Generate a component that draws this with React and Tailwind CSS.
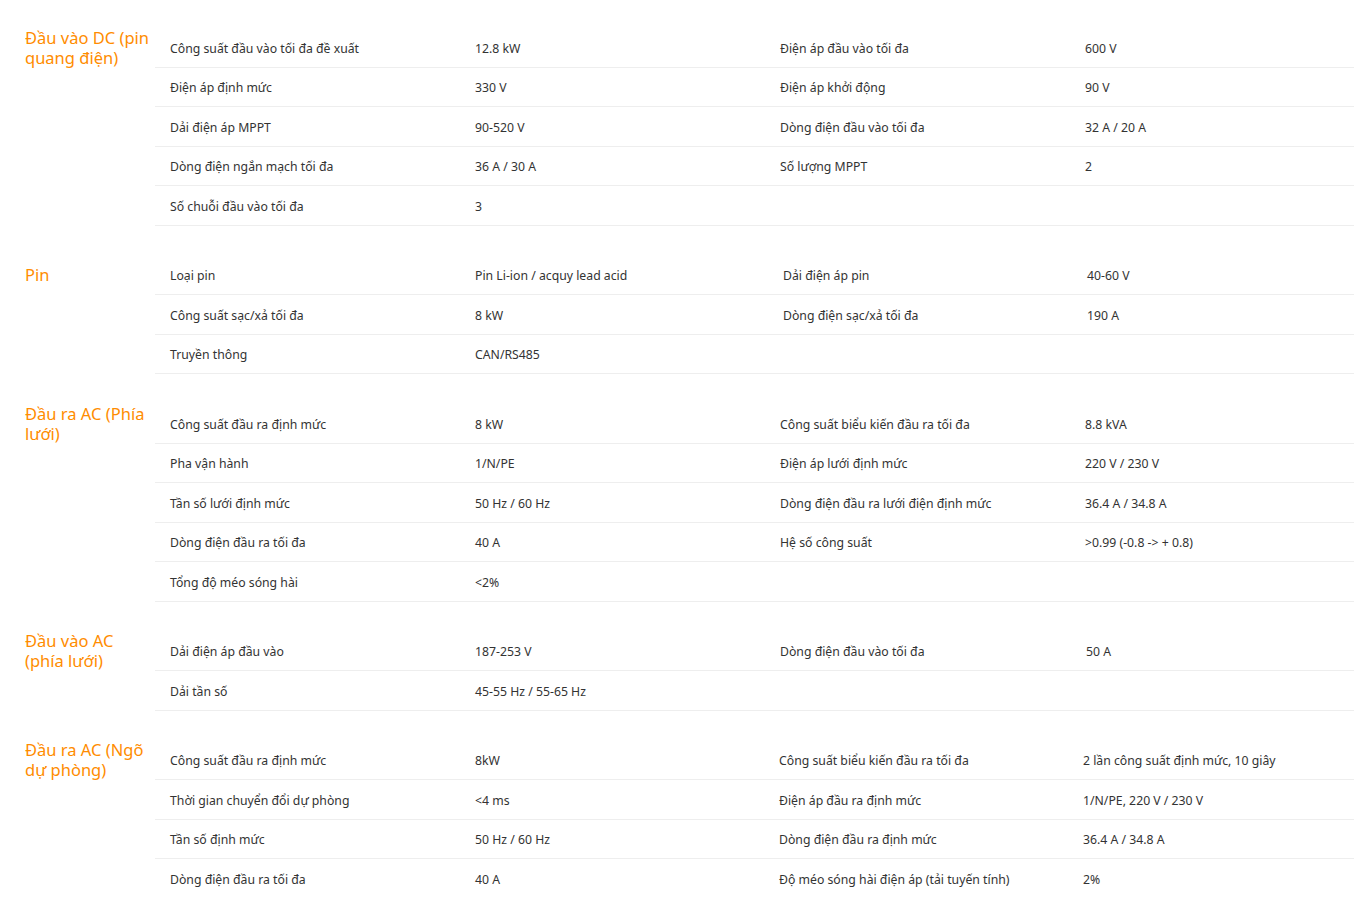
const sections = [
  {
    title: ['Đầu vào DC (pin', 'quang điện)'],
    cols: 'grid-cols-[305px_305px_305px_1fr]',
    rows: [
      ['Công suất đầu vào tối đa đề xuất', '12.8 kW', 'Điện áp đầu vào tối đa', '600 V'],
      ['Điện áp định mức', '330 V', 'Điện áp khởi động', '90 V'],
      ['Dải điện áp MPPT', '90-520 V', 'Dòng điện đầu vào tối đa', '32 A / 20 A'],
      ['Dòng điện ngắn mạch tối đa', '36 A / 30 A', 'Số lượng MPPT', '2'],
      ['Số chuỗi đầu vào tối đa', '3', '', ''],
    ],
  },
  {
    title: ['Pin'],
    cols: 'grid-cols-[305px_308px_304px_1fr]',
    rows: [
      ['Loại pin', 'Pin Li-ion / acquy lead acid', 'Dải điện áp pin', '40-60 V'],
      ['Công suất sạc/xả tối đa', '8 kW', 'Dòng điện sạc/xả tối đa', '190 A'],
      ['Truyền thông', 'CAN/RS485', '', ''],
    ],
  },
  {
    title: ['Đầu ra AC (Phía', 'lưới)'],
    cols: 'grid-cols-[305px_305px_305px_1fr]',
    rows: [
      ['Công suất đầu ra định mức', '8 kW', 'Công suất biểu kiến đầu ra tối đa', '8.8 kVA'],
      ['Pha vận hành', '1/N/PE', 'Điện áp lưới định mức', '220 V / 230 V'],
      ['Tần số lưới định mức', '50 Hz / 60 Hz', 'Dòng điện đầu ra lưới điện định mức', '36.4 A / 34.8 A'],
      ['Dòng điện đầu ra tối đa', '40 A', 'Hệ số công suất', '>0.99 (-0.8 -> + 0.8)'],
      ['Tổng độ méo sóng hài', '<2%', '', ''],
    ],
  },
  {
    title: ['Đầu vào AC', '(phía lưới)'],
    cols: 'grid-cols-[305px_305px_306px_1fr]',
    rows: [
      ['Dải điện áp đầu vào', '187-253 V', 'Dòng điện đầu vào tối đa', '50 A'],
      ['Dải tần số', '45-55 Hz / 55-65 Hz', '', ''],
    ],
  },
  {
    title: ['Đầu ra AC (Ngõ', 'dự phòng)'],
    cols: 'grid-cols-[305px_304px_304px_1fr]',
    rows: [
      ['Công suất đầu ra định mức', '8kW', 'Công suất biểu kiến đầu ra tối đa', '2 lần công suất định mức, 10 giây'],
      ['Thời gian chuyển đổi dự phòng', '<4 ms', 'Điện áp đầu ra định mức', '1/N/PE, 220 V / 230 V'],
      ['Tần số định mức', '50 Hz / 60 Hz', 'Dòng điện đầu ra định mức', '36.4 A / 34.8 A'],
      ['Dòng điện đầu ra tối đa', '40 A', 'Độ méo sóng hài điện áp (tải tuyến tính)', '2%'],
    ],
  },
]

function Section({ title, cols, rows }) {
  return (
    <div className="flex flex-col">
      {rows.map((row, i) => (
        <div key={i} className="flex">
          <div className="w-[155px] shrink-0 pl-[25px] flex items-center">
            {i === 0 && (
              <div className="text-[16.5px] leading-[20px] text-[#ff8c00] -my-[2px]">
                {title.map((t) => (
                  <div key={t}>{t}</div>
                ))}
              </div>
            )}
          </div>
          <div
            className={`flex-1 grid ${cols} items-center h-[39.5px] border-b border-[#eeeeee] text-[12.25px] leading-[18px] text-[#333] pt-[3px]`}
          >
            {row.map((cell, j) => (
              <div key={j} className="pl-[15px] whitespace-nowrap">
                {cell}
              </div>
            ))}
          </div>
        </div>
      ))}
    </div>
  )
}

export default function App() {
  return (
    <div
      className="min-h-screen bg-white pt-[28px] flex flex-col gap-[30px] overflow-hidden"
      style={{ fontFamily: '"Noto Sans", "Open Sans", sans-serif' }}
    >
      {sections.map((s) => (
        <Section key={s.title[0]} {...s} />
      ))}
    </div>
  )
}
